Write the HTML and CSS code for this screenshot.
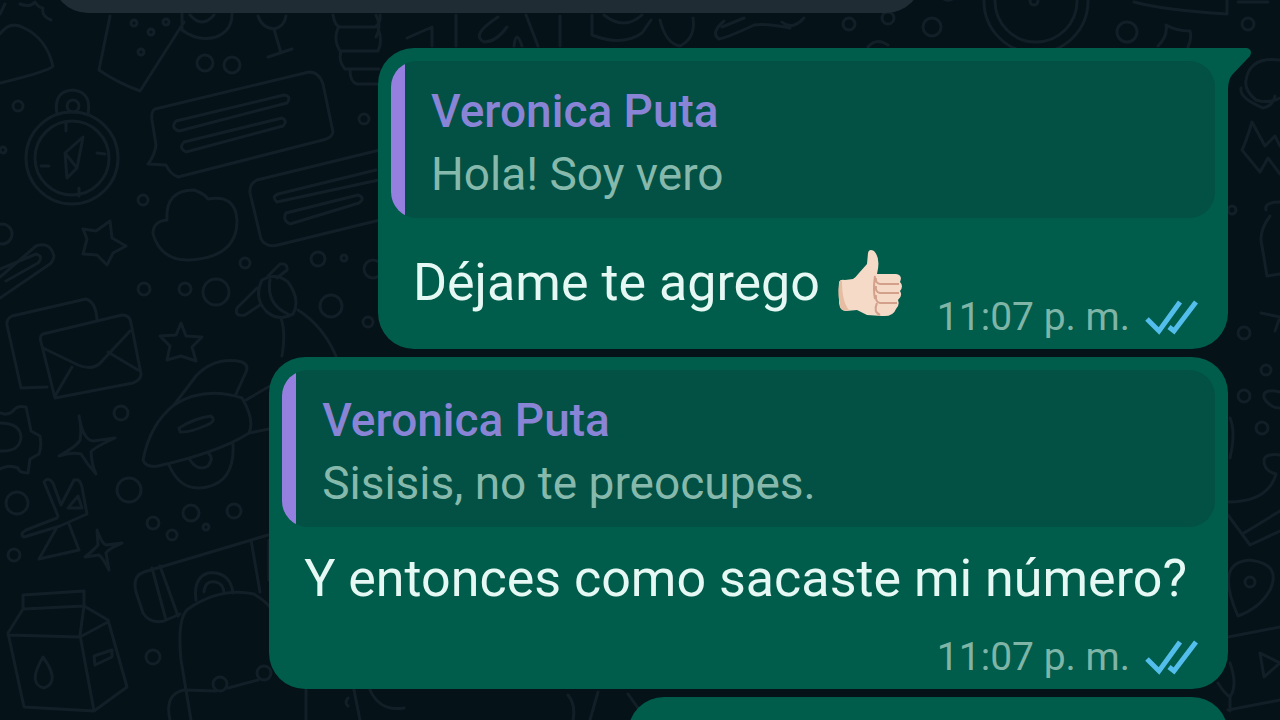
FILE: index.html
```html
<!doctype html>
<html lang="es">
<head>
<meta charset="utf-8">
<meta name="viewport" content="width=device-width, initial-scale=1.0"/>
<title>Chat</title>
<link rel="stylesheet" href="styles.css">
</head>
<body>
<svg class="wallpaper" viewBox="0 0 1280 720" preserveAspectRatio="xMinYMin slice" aria-hidden="true">
	<!-- top row -->
	<path d="M0 34Q10 20 24 28Q46 38 53 66Q50 71 0 83M0 14l5-10M20 4q10 4 15-2q4 6 8 6q-2 8 8 12M110 16L99 70Q116 82 140 91L184 22M182 14v16q16 12 34 7q16-6 16-23M190 15q12 14 24 0M258 16q4 12 16 13q10-2 12-13M274 29l7 24M268 57l24-8"/>
	<circle cx="134" cy="23" r="3"/><circle cx="151" cy="32" r="3"/><circle cx="166" cy="22" r="3"/><circle cx="141" cy="52" r="3"/>
	<circle cx="205" cy="63" r="8"/><circle cx="232" cy="65" r="8"/><circle cx="18" cy="106" r="5"/>
	<path d="M333 15q2 12 8 12h34q6-4 5-12M338 28q-5 12 2 23h38q5-10 0-23M341 51q-3 10 4 18h34M350 70q0 12 7 14h22M376 15q6 12 0 22M407 38l25-11v19M456 15v31M498 17q-28 18-14 25q12 0 23-15M514 46q2-18 8 0M526 15l12 31M560 16v30M592 15v20q30 12 50-2l9-13M604 15q20 16 38 0M660 20q6 24 20 26q16-8 13-28M724 21q-14 12-5 18q10-2 35-14q12-2 36 3M744 18l-22 9M782 22q10 9 22-4"/>
	<circle cx="849" cy="24" r="6"/><circle cx="888" cy="18" r="6"/><circle cx="932" cy="27" r="9"/><path d="M942-2q8 5 14-2M868 47q8-10 20-2"/>
	<circle cx="1036" cy="1" r="52"/><circle cx="1036" cy="1" r="41"/><circle cx="1034" cy="1" r="4"/>
	<circle cx="1127" cy="32" r="10"/><circle cx="1248" cy="24" r="6"/>
	<path d="M1134 2q30 8 93 12v-14M1238 2h30M1158 46q10-10 8-21q10 6 24 6q2 8-2 16"/>
	<!-- compass -->
	<circle cx="72" cy="158" r="46"/><circle cx="72" cy="158" r="37"/><circle cx="73" cy="106" r="6"/>
	<path d="M57 114q-4-23 16-24q19 2 15 24M83 137l-18 16l2 25l10-10zM65 153l12 15M66 123v8M97 153l8 1M41 166h8M79 188v8"/>
	<!-- speech bubbles -->
	<path d="M155 109L309 72Q319 72 323 84L333 132Q332 138 323 140L178 177Q170 174 166 165L148 164Q155 155 156 145L152 120Q151 111 155 109zM176 121L284 95q8 1 3 8L179 131q-9-3-3-10zM184 142L282 118q6 3 1 8L186 152q-8-4-2-10zM388 148L257 180Q249 184 250 193L261 239Q266 248 278 245L388 218M278 194L376 170M388 178L277 202q-6-5 1-8M286 213L358 195q8 3 1 8L290 224q-8-4-4-11z"/>
	<circle cx="364" cy="119" r="5"/><circle cx="3" cy="150" r="3"/>
	<!-- cloud, stars, clip -->
	<path d="M167 220Q165 190 194 190Q205 194 208 199Q236 194 237 221Q237 257 190 260Q161 261 153 234Q153 221 167 220zM83 229l13 2l14-10l2 17l14 8l-13 7l-6 12l-10-10l-14-1l4-15zM181 323l5 13l16 1l-10 10l4 14l-15-5l-14 4l3-14l-10-10l16-1zM0 277L36 246q14-5 18 10q-1 7-7 10L0 298M0 269l36-15q8 2 2 9L6 281"/>
	<circle cx="2" cy="234" r="10"/><circle cx="143" cy="200" r="5"/><circle cx="144" cy="289" r="6"/><circle cx="185" cy="289" r="6"/><circle cx="216" cy="292" r="13"/><circle cx="245" cy="263" r="5"/><circle cx="318" cy="259" r="7"/><circle cx="344" cy="258" r="3"/><circle cx="331" cy="306" r="11"/><circle cx="373" cy="269" r="9"/><circle cx="368" cy="322" r="5"/>
	<!-- flower -->
	<path d="M262 280q-9 18 5 32q12 10 26 2q8-14-5-32q-12-10-26-2zM270 280q-4 24 18 34M268 276l12-12q8-1 7 6l-10 8M257 288l-20 20q-3 9 8 7l15-10M281 318q5 15 1 38M298 310q25 16 38 46"/>
	<!-- envelopes -->
	<path d="M97 320Q96 302 86 299L12 316Q6 319 7 325L21 388L47 387M43 334L122 315q8 0 9 8L141 374q0 6-8 9L55 398L41 342q-2-6 2-8zM43 348L78 365Q94 372 103 360L130 331M55 396L72 367M108 352l30 18"/>
	<!-- gear and sparkle -->
	<path d="M0 413q8 3 13-2q4-6 13-4l3 14l2 10l9 5q2 10-1 18l-9 5l-2 14q-9 0-10-5q-10-4-18 1M0 423q20 0 21 14q-1 15-21 14M79 416q4 24 14 25l22-3q-22 10-24 14q1 14 5 22q-9-10-15-20q-10-2-22 2q18-10 21-16q2-12-1-24z"/>
	<circle cx="121" cy="413" r="7"/><circle cx="129" cy="490" r="12"/><circle cx="17" cy="503" r="11"/><circle cx="153" cy="523" r="6"/><circle cx="191" cy="513" r="8"/><circle cx="234" cy="511" r="7"/><circle cx="172" cy="535" r="5"/><circle cx="14" cy="555" r="6"/><circle cx="206" cy="527" r="3"/>
	<!-- rocket -->
	<path d="M143 460Q150 424 174 405Q204 386 242 398Q255 420 249 433Q220 452 158 466Q146 468 143 460zM174 405L196 376Q215 356 242 362q7 3 4 10l-10 22M179 428q16-10 32-12q6 5-4 9q-18 8-27 7zM246 400l24-14M249 433l20-4M169 465q12 28 38 22q28-6 26-43M190 460q8 12 18 6q6-8 1-12"/>
	<!-- pinwheel -->
	<path d="M58 516L44 482q4-6 9 1l8 22l13-25q6-2 8 7l5 27L60 526L24 537q-5-3 2-7l31-12M69 524l10 26l-40 9l17-30M78 496l-10 12h14zM97 530q5 14 9 15l16-2q-14 6-16 10l3 17q-6-12-10-15l-14 2q10-8 13-12z"/>
	<!-- milk carton -->
	<path d="M23 609v-14L84 591v15zM23 609L8 633L24 707L94 711L80 635L84 606L108 620L127 687L94 711M8 635L80 637L108 622M43 657q-16 27 1 31q17-6-1-31zM94 656l18-6v7l-17 8z"/>
	<!-- camera and backpack -->
	<path d="M268 535L144 572Q132 576 136 592L143 613Q150 624 164 621L180 614M152 568L166 620M160 566L178 616M251 540L260 592M269 540v40M196 600q-3-22 12-27q22-2 25 20M204 592q1-12 12-10q8 2 8 12M191 720L181 660Q177 618 188 609Q220 587 254 594Q270 604 275 614M170 720q-6-26 14-30l32 1M228 688l30-8M306 690v30M354 690l6 30M348 706q-4-3 0-8M370 690q10 22 34 18"/>
	<circle cx="153" cy="657" r="7"/><circle cx="220" cy="684" r="7"/><circle cx="264" cy="673" r="7"/>
	<path d="M568 695q8 10 5 25M598 692l-8 28M628 694l10 14"/>
	<!-- right edge -->
	<path d="M1280 60q-30-4-34 20q-2 10 10 20q12 4 24-2M1241 88q-2 10 22 20q10-2 12-12M1252 122q-6 20-10 28l18 22l8-14l12 16M1252 122l13 24l10-10l5 10M1266 210q-2-8 14-8M1270 216q-12 16-8 30l5 30l13-2M1261 313l19 4l-5 14"/>
	<circle cx="1232" cy="210" r="4"/><circle cx="1244" cy="333" r="6"/><circle cx="1266" cy="370" r="5"/><circle cx="1244" cy="396" r="6"/><circle cx="1262" cy="428" r="6"/>
	<path d="M1280 392q-18-4-16 6q6 10 16 10M1280 455q-16-2-16 6q0 10 12 13q-8 28-48 28M1228 515l22 30l30-14M1244 533l36-22M1238 616q-24-54 12-56q32 4 20 30q-10 18-32 26zM1228 637l52-10M1260 653l4 24l16-14zM1228 710l52-10M1218 683q6 10 12 14q8-12 0-34M1230 697v14M1230 418q6 14 0 40"/>
	<circle cx="1250" cy="582" r="5"/>
</svg>

<main class="chat">
	<div class="msg msg-in"></div>
	<div class="msg msg-tail">
		<svg class="tail" viewBox="0 0 24 42" aria-hidden="true"><path d="M0 0H20Q26 2 23 8L5 27Q1 32 1 42H0z"/></svg>
		<blockquote class="quote">
			<p class="name">Veronica Puta</p>
			<p class="quoted">Hola! Soy vero</p>
		</blockquote>
		<div class="body">
			<p class="text">Déjame te agrego
				<svg class="thumb" viewBox="0 0 66 70" role="img" aria-label="Pulgar arriba">
					<path class="skin" d="M2 34Q3 31 8 32L16 31Q19 29 22 25L30 16L31 5Q32 0 37 3Q44 10 40 26L59 26Q66 27 63 34Q67 38 63 43Q66 48 61 52Q63 57 59 61Q56 69 45 68L30 67L20 62L9 63Q3 63 2 55Z"/>
					<path class="shade" d="M2 35Q0 48 4 61Q9 64 12 62Q5 54 5 33Q3 32 2 35z"/>
					<path class="fold" d="M62 36H43Q38 35 39 30M62 45H43Q38 44 39 38M60 55H43Q38 54 39 47M40 55Q36 64 43 67M38 28Q36 42 38 51"/>
				</svg>
			</p>
			<div class="stamp">
				<time datetime="23:07">11:07 p. m.</time>
				<svg class="ticks" viewBox="0 0 54 36" role="img" aria-label="Leído"><path d="M2 20L14 32L35 3M24 28L29 32L51 3"/></svg>
			</div>
		</div>
	</div>
	<div class="msg">
		<blockquote class="quote">
			<p class="name">Veronica Puta</p>
			<p class="quoted">Sisisis, no te preocupes.</p>
		</blockquote>
		<div class="body body-long">
			<p class="text">Y entonces como sacaste mi número?</p>
			<div class="stamp">
				<time datetime="23:07">11:07 p. m.</time>
				<svg class="ticks" viewBox="0 0 54 36" role="img" aria-label="Leído"><path d="M2 20L14 32L35 3M24 28L29 32L51 3"/></svg>
			</div>
		</div>
	</div>
	<div class="msg msg-next"></div>
</main>
</body>
</html>
```

FILE: styles.css
```css
html,body,p,blockquote{margin:0;padding:0}
html,body{height:100%;overflow:hidden}
body{position:relative;background:#051218;font-family:Roboto,"Noto Sans",sans-serif;color:#e6f8f3}

.wallpaper{position:absolute;left:0;top:0;width:100%;height:100%;fill:none;stroke:#131f27;stroke-width:3;stroke-linecap:round;stroke-linejoin:round}

.chat{position:relative;box-sizing:border-box;display:flex;flex-direction:column;align-items:flex-end;gap:8px;height:100%;padding:0 52px;overflow:hidden}
.msg{position:relative;box-sizing:border-box;flex:none;padding:13px 13px 0;border-radius:36px;background:#005c4b}
.msg-in{align-self:flex-start;width:74%;height:73px;margin:-60px 0 27px;background:#1f2c34}
.msg-tail{border-top-right-radius:0}
.msg-next{width:51%;height:80px}
.tail{position:absolute;left:100%;top:0;width:24px;height:42px;margin-left:-1px;fill:#005c4b}

.quote{position:relative;box-sizing:border-box;height:157px;padding:20px 40px 0;border-radius:26px;background:#025144;overflow:hidden}
.quote:before{content:"";position:absolute;left:0;top:0;width:14px;height:100%;background:#9580e0}
.name{font-size:46px;line-height:60px;font-weight:500;color:#8a84d6}
.quoted{font-size:46px;line-height:66px;color:#86b9ac}

.body{display:flex;align-items:flex-end;justify-content:space-between;padding:0 16px 12px 22px}
.text{padding:30px 0 22px;font-size:52px;line-height:64px;white-space:nowrap}
.thumb{width:66px;height:70px;margin:0 0 -18px 4px;vertical-align:baseline}
.stamp{display:flex;align-items:center;gap:15px;margin-left:34px;font-size:39px;line-height:40px;color:#7fb5a7;white-space:nowrap}
.ticks{width:54px;height:36px;fill:none;stroke:#53bdeb;stroke-width:5}

.body-long{flex-direction:column;align-items:stretch}
.body-long .text{padding:20px 12px 26px 0}
.body-long .stamp{align-self:flex-end}

.skin{fill:#f5dac7}
.shade{fill:#e6bda3}
.fold{fill:none;stroke:#d3a08c;stroke-width:2}
```
